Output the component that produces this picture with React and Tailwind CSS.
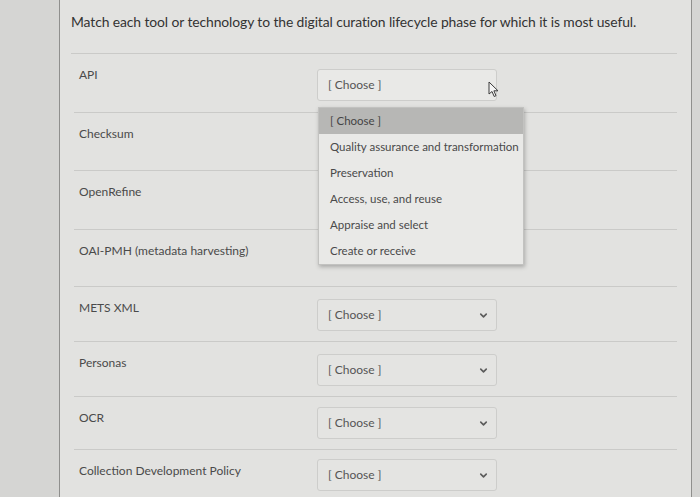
import { ChevronDown } from "lucide-react";

const rows = [
  { label: "API", h: "h-[59px]", mt: "mt-[15px]", open: true },
  { label: "Checksum", h: "h-[58px]", hidden: true },
  { label: "OpenRefine", h: "h-[59px]", hidden: true },
  { label: "OAI-PMH (metadata harvesting)", h: "h-[57px]", hidden: true },
  { label: "METS XML", h: "h-[55px]", mt: "mt-[12px]" },
  { label: "Personas", h: "h-[55px]", mt: "mt-[12px]" },
  { label: "OCR", h: "h-[53px]", mt: "mt-[10px]" },
  { label: "Collection Development Policy", h: "h-[60px]", mt: "mt-[9px]", last: true },
];

const options = [
  "[ Choose ]",
  "Quality assurance and transformation",
  "Preservation",
  "Access, use, and reuse",
  "Appraise and select",
  "Create or receive",
];

function Cursor() {
  return (
    <svg width="12" height="17" viewBox="0 0 12 17" className="absolute right-[-4px] top-[11px]">
      <path
        d="M1 1 L1 13 L4 10.5 L6.2 15.5 L8 14.7 L5.9 9.8 L10 9.8 Z"
        fill="#f4f4f4"
        stroke="#3a3a3a"
        strokeWidth="1"
        strokeLinejoin="round"
      />
    </svg>
  );
}

function Select({ mt, open }) {
  return (
    <div
      className={`relative ${mt} flex h-[32px] w-[180px] items-center justify-between rounded-[3px] border border-[#cdcdcb] ${
        open ? "bg-[#e9e9e7]" : "bg-[#e4e4e2]"
      } pl-[10px] pr-[7px]`}
    >
      <span className="text-[12px] text-[#555555]">[ Choose ]</span>
      {open ? <Cursor /> : <ChevronDown size={11} strokeWidth={3.5} className="text-[#5c5c5c]" />}
    </div>
  );
}

export default function App() {
  return (
    <div
      className="h-[497px] w-[700px] overflow-hidden bg-[#d5d5d3] pl-[59px]"
      style={{ fontFamily: "Lato, 'Open Sans', sans-serif" }}
    >
      <div className="relative h-full w-[633px] border-x border-[#8f8f8d] bg-[#e2e2e0] px-[14px]">
        <div className="-ml-[3px] border-b border-[#cacac8] pb-[21px] pt-[12px] text-[13.9px] leading-[20px] tracking-[-0.1px] text-[#333333]">
          Match each tool or technology to the digital curation lifecycle phase for which it is most useful.
        </div>

        {rows.map((row) => (
          <div
            key={row.label}
            className={`flex ${row.h} ${row.last ? "" : "border-b border-[#cacac8]"}`}
          >
            <div className="w-[243px] pl-[5px] pt-[13px] text-[12px] leading-[16px] text-[#4a4a4a]">
              {row.label}
            </div>
            {row.hidden ? null : <Select mt={row.mt} open={row.open} />}
          </div>
        ))}

        {/* open dropdown list */}
        <div className="absolute left-[258px] top-[107px] w-[206px] border border-[#c2c2c0] bg-[#e9e9e7] shadow-[1px_2px_4px_rgba(0,0,0,0.25)]">
          {options.map((opt, i) => (
            <div
              key={opt}
              className={`flex h-[26px] items-center whitespace-nowrap pl-[11px] text-[11.5px] ${
                i === 0 ? "bg-[#b7b7b5] text-[#444444]" : "text-[#4a4a4a]"
              }`}
            >
              {opt}
            </div>
          ))}
        </div>
      </div>
    </div>
  );
}
